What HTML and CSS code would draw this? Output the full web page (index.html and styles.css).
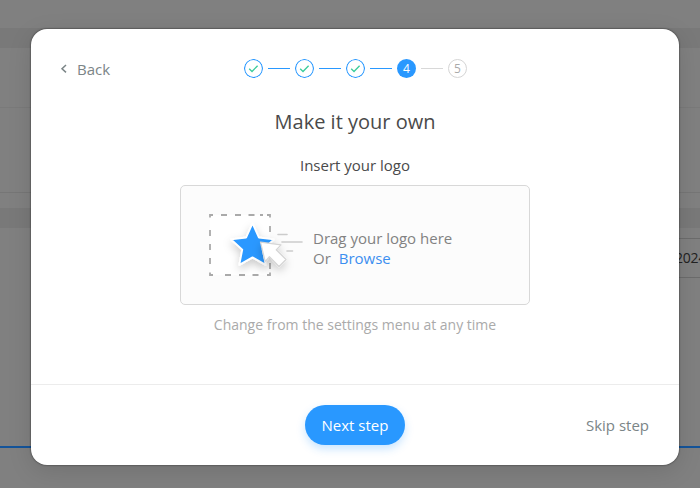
FILE: index.html
```html
<!DOCTYPE html>
<html lang="en">
<head>
<meta charset="utf-8">
<title>Make it your own</title>
<link rel="stylesheet" href="styles.css">
</head>
<body>
<div class="page">
  <div class="band top"></div>
  <div class="band gap"></div>
  <div class="band row"></div>
  <div class="band second"></div>
  <div class="band tail"></div>
  <div class="band gap"></div>
  <div class="band content"><div class="field">2024</div></div>
  <div class="band bottom"></div>
</div>
<main class="modal">
  <header class="head">
    <a class="back"><svg width="8" height="10" viewBox="0 0 8 10"><path d="M6 1 2 4.700 6 8.400" fill="none" stroke="#7b8587" stroke-width="1.5"/></svg>Back</a>
    <div class="steps">
      <svg class="step" viewBox="0 0 19 19"><circle cx="9.5" cy="9.5" r="9"/><path d="m5.2 9.8 2.8 2.7 5.6-5.8"/></svg>
      <i class="line"></i>
      <svg class="step" viewBox="0 0 19 19"><circle cx="9.5" cy="9.5" r="9"/><path d="m5.2 9.8 2.8 2.7 5.6-5.8"/></svg>
      <i class="line"></i>
      <svg class="step" viewBox="0 0 19 19"><circle cx="9.5" cy="9.5" r="9"/><path d="m5.2 9.8 2.8 2.7 5.6-5.8"/></svg>
      <i class="line"></i>
      <span class="step current">4</span>
      <i class="line muted"></i>
      <span class="step future">5</span>
    </div>
  </header>
  <section class="body">
    <h1>Make it your own</h1>
    <h2>Insert your logo</h2>
    <div class="drop">
      <svg class="art" width="112" height="90" viewBox="0 0 112 90">
        <defs><filter id="shadow" x="-40%" y="-40%" width="180%" height="190%"><feDropShadow dx="0" dy="4" stdDeviation="4" flood-color="#000" flood-opacity=".2"/></filter></defs>
        <path d="M10 15h60v60H10z" fill="#fff"/>
        <g fill="none" stroke="#aaa" stroke-width="1.8">
          <path d="M10 17.500V15h3M67 15h3v2.500M70 72.500V75h-3M13 75H10v-2.500"/>
          <path d="M21 15h6M35 15h6M48.500 15h6M60 15h3M25 75h6M39 75h6M52.500 75h6M10 30v6M10 44v6M10 58v6M70 26v6M70 63v6"/>
        </g>
        <path d="M78 34.500h9M82 42h20M87 51h5.500" stroke="#ccc" stroke-width="1.6" stroke-linecap="round"/>
        <g filter="url(#shadow)"><path d="m52.500 23.500 6.300 14 15.100 1.800-11.200 10.300 3 15.300-13.200-7.500-13.200 7.500 3-15.300-11.200-10.300 15.100-1.800z" fill="#2998ff" stroke="#fff" stroke-width="1.800" stroke-linejoin="round"/></g>
        <g filter="url(#shadow)"><path d="m60.500 42.200 20.500 2.600-4.800 5 9.800 9.700-7 7-9.600-9.800-4.200 4.800z" fill="#fff" stroke="#d5d5d5" stroke-width="1.200" stroke-linejoin="round"/></g>
      </svg>
      <div class="prompt"><div>Drag your logo here</div><div>Or <a>Browse</a></div></div>
    </div>
    <p>Change from the settings menu at any time</p>
  </section>
  <footer class="foot">
    <button>Next step</button>
    <a class="skip">Skip step</a>
  </footer>
</main>
</body>
</html>
```
FILE: styles.css
```css
* { box-sizing: border-box; }
body {
  margin: 0;
  width: 700px;
  height: 488px;
  overflow: hidden;
  font-family: "Open Sans", sans-serif;
  font-size: 15px;
  line-height: 20px;
  background: #808080;
}
.page { display: flex; flex-direction: column; height: 488px; }
.band { flex: none; }
.top { height: 28px; }
.gap { height: 20px; background: #797979; }
.row { height: 60px; border-bottom: 1px solid #7a7a7a; }
.second { height: 85px; border-bottom: 1px solid #767676; }
.tail { height: 15px; }
.content { height: 218px; padding-top: 10px; }
.field {
  height: 40px;
  margin-left: 620px;
  padding-left: 54px;
  border: 1px solid #6c6c6c;
  border-right: 0;
  font-size: 14px;
  line-height: 38px;
  letter-spacing: -.2px;
  color: #222;
}
.bottom { flex: 1; border-top: 2px solid #14549a; }
.modal {
  position: absolute;
  left: 31px;
  top: 29px;
  width: 648px;
  height: 436px;
  display: flex;
  flex-direction: column;
  border-radius: 16px;
  background: #fff;
  box-shadow: 0 0 2px rgba(0, 0, 0, .7), 0 6px 24px rgba(0, 0, 0, .12);
}
.head {
  display: grid;
  grid-template-columns: 1fr auto 1fr;
  align-items: center;
  height: 79px;
  padding: 0 30px;
}
.back { display: flex; align-items: center; gap: 9px; margin-left: -1px; color: #7b8587; }
.steps { display: flex; align-items: center; gap: 5px; margin-left: 1px; }
.step { display: block; width: 19px; height: 19px; border-radius: 50%; font-size: 12px; text-align: center; }
.step circle { fill: none; stroke: #2998ff; stroke-width: 1.2; }
.step path { fill: none; stroke: #39cc9b; stroke-width: 1.3; }
.current { background: #2998ff; color: #fff; line-height: 19px; font-weight: 500; }
.future { border: 1px solid #d5d5d5; color: #aaa; line-height: 17px; }
.line { width: 22px; height: 1px; background: #2998ff; }
.muted { background: #d8d8d8; }
.body { flex: 1; display: flex; flex-direction: column; align-items: center; }
h1 { margin: 0; font-size: 20px; line-height: 28px; font-weight: 400; color: #4a4a4a; }
h2 { margin: 19px 0 0; font-size: 15px; line-height: 20px; font-weight: 400; color: #4a4a4a; }
.drop {
  display: flex;
  align-items: center;
  width: 350px;
  height: 120px;
  margin-top: 10px;
  padding-left: 19px;
  border: 1px solid #d8d8d8;
  border-radius: 5px;
  background: #fcfcfc;
}
.art { flex: none; }
.prompt { padding: 5px 0 0 1px; color: #828282; white-space: nowrap; }
.prompt a { margin-left: 4px; color: #3c8ff0; }
p { margin: 10px 0 0; font-size: 14px; line-height: 20px; color: #aaa; }
.foot {
  display: grid;
  grid-template-columns: 1fr 100px 1fr;
  align-items: center;
  height: 81px;
  padding: 0 30px;
  border-top: 1px solid #ececec;
}
button {
  grid-column: 2;
  height: 40px;
  padding: 0;
  border: 0;
  border-radius: 20px;
  background: #2998ff;
  box-shadow: 0 4px 8px rgba(41, 152, 255, .25);
  color: #fff;
  font: 500 15px/20px "Open Sans", sans-serif;
}
.skip { justify-self: end; color: #7b8587; }
```
